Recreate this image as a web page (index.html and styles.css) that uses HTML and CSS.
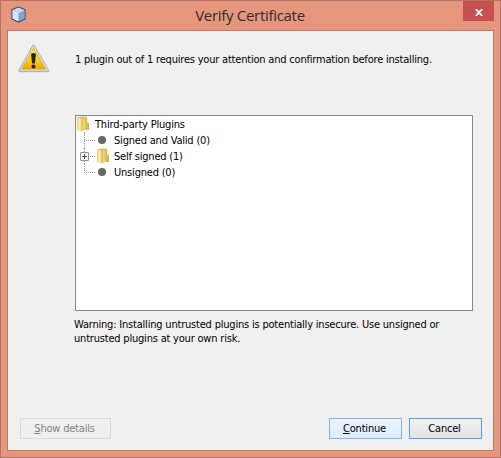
FILE: index.html
```html
<!DOCTYPE html>
<html lang="en">
<head>
<meta charset="utf-8">
<title>Verify Certificate</title>
<link rel="stylesheet" href="styles.css">
</head>
<body>
<div class="window">
  <header class="titlebar">
    <svg class="app-icon" width="18" height="18" viewBox="0 0 18 18">
      <path d="M8.500 1L15 3.700V13L8.500 16L2 13V3.700Z" fill="#a9c6de" stroke="#34435e" stroke-width="1.100" stroke-linejoin="round"/>
      <path d="M8.500 1.600L14.500 4.200L8.500 6.800L2.500 4.200Z" fill="#c3d9e9"/>
      <path d="M2.600 4.500L8.300 6.900V15.200L2.600 12.600Z" fill="#d3e9f6"/>
      <path d="M8.700 6.900L14.400 4.500V12.600L8.700 15.200Z" fill="#86a3c4"/>
    </svg>
    <h1 class="title"><span>Verify Certificate</span></h1>
    <button class="close" aria-label="Close">
      <svg width="8" height="7" viewBox="0 0 8 7"><path d="M.8 0L7.200 7M7.200 0L.8 7" stroke="#fff" stroke-width="1.800"/></svg>
    </button>
  </header>
  <main class="content">
    <section class="message">
      <svg class="warning-icon" width="32" height="30" viewBox="0 0 32 30">
        <defs><linearGradient id="yellow" x2="0" y2="1"><stop stop-color="#fff253"/><stop offset=".5" stop-color="#f8d51c"/><stop offset="1" stop-color="#efa800"/></linearGradient></defs>
        <path d="M15.500 2.500L29.500 26.500H2Z" fill="#c4c4c4" stroke="#b4b4b4" stroke-width="3.400" stroke-linejoin="round"/>
        <path d="M15.500 2.800L29 26H2.500Z" fill="none" stroke="#dedede" stroke-width="1.500" stroke-linejoin="round"/>
        <path d="M15.500 4.500L27.500 25H3.800Z" fill="url(#yellow)" stroke="#d4a900" stroke-width=".7"/>
        <path d="M13.100 10.500Q13.100 9 15.500 9T17.900 10.500L16.900 19.500H14.100Z" fill="#242424"/>
        <circle cx="15.500" cy="22.500" r="2" fill="#242424"/>
      </svg>
      <p class="prompt">1 plugin out of 1 requires your attention and confirmation before installing.</p>
    </section>
    <ul class="tree">
      <li class="root"><svg class="folder" width="14" height="16"><use href="#folder"/></svg><span>Third-party Plugins</span></li>
      <li class="node"><i class="branch"></i><i class="dot"></i><span>Signed and Valid (0)</span></li>
      <li class="node"><i class="branch"><svg class="expand" width="9" height="9"><rect x=".5" y=".5" width="8" height="8" rx=".5" fill="#f6f6f6" stroke="#919191"/><path d="M2 4.500H7M4.500 2V7" stroke="#2850a8"/></svg></i><svg class="folder" width="14" height="16">
        <defs>
          <linearGradient id="flap"><stop stop-color="#e9cd68"/><stop offset=".5" stop-color="#faeeb0"/><stop offset="1" stop-color="#eed67c"/></linearGradient>
          <linearGradient id="back"><stop stop-color="#f4e293"/><stop offset="1" stop-color="#d9b342"/></linearGradient>
        </defs>
        <g id="folder"><path d="M1 1.500L5 .5H11V6L13 7V14H1Z" fill="#e0bf55"/><path d="M1 1.500L6 3V15.500L1 14Z" fill="url(#flap)"/><path d="M6.500 3L11 1V12.500L6.500 15.500Z" fill="url(#back)"/><path d="M6 3V15.500" stroke="#cda63a" stroke-width=".7"/><path d="M12.300 10V13.500" stroke="#75b5e0"/></g>
      </svg><span>Self signed (1)</span></li>
      <li class="node last"><i class="branch"></i><i class="dot"></i><span>Unsigned (0)</span></li>
    </ul>
    <p class="warning">Warning: Installing untrusted plugins is potentially insecure. Use unsigned or<br>untrusted plugins at your own risk.</p>
    <footer class="actions">
      <button class="btn details" disabled><span><u>S</u>how details</span></button>
      <button class="btn continue"><span><u>C</u>ontinue</span></button>
      <button class="btn cancel"><span>Cancel</span></button>
    </footer>
  </main>
</div>
</body>
</html>
```
FILE: styles.css
```css
* { box-sizing: border-box; }
body { margin: 0; }
h1, p, ul { margin: 0; padding: 0; }
.window {
  width: 501px; height: 458px; padding: 0 6px 6px; display: flex; flex-direction: column;
  border: 1px solid #b27462; background: #e6967c;
  font: 11px/16px "DejaVu Sans Condensed", "DejaVu Sans", sans-serif; font-stretch: condensed; letter-spacing: -.2px; color: #000;
}
.titlebar { height: 29px; display: flex; align-items: flex-start; }
.app-icon { margin: 5px 0 0 3px; }
.title { flex: 1; padding: 4px 0 0 9px; text-align: center; font: 400 15px/20px "Open Sans", sans-serif; color: #302d2c; letter-spacing: -.3px; }
.close { width: 31px; height: 20px; padding: 2px 0 0 1px; border: 0; background: #c75050; display: flex; align-items: center; justify-content: center; }
.content { flex: 1; border: 1px solid #c17761; background: #f0f0f0; padding: 0 20px 0 12px; display: flex; flex-direction: column; }
.message { height: 84px; display: flex; align-items: flex-start; }
.warning-icon { margin: 13px 0 0 -2px; }
.prompt { margin: 21px 0 0 25px; white-space: nowrap; }
.tree { height: 196px; margin-left: 55px; border: 1px solid #828790; background: #fff; list-style: none; }
.tree li { height: 16px; display: flex; align-items: center; }
.tree span { padding-top: 1px; white-space: nowrap; }
.root span { margin-left: 5px; }
.node { padding-left: 8px; }
.branch { position: relative; width: 12px; height: 16px; flex: none; }
.branch::before { content: ""; position: absolute; left: 0; top: 0; height: 16px; border-left: 1px dotted #999; }
.last .branch::before { height: 9px; }
.branch::after { content: ""; position: absolute; left: 0; top: 8px; width: 11px; border-top: 1px dotted #999; }
.expand { position: absolute; z-index: 1; left: -4px; top: 4px; }
.dot { width: 8px; height: 8px; border-radius: 50%; background: #666; margin: 0 8px 0 2px; flex: none; }
.node .folder { margin-right: 4px; }
.warning { margin: 7px 0 0 54px; line-height: 14px; white-space: nowrap; }
.actions { display: flex; margin-top: auto; height: 32px; align-items: flex-start; }
.btn { height: 21px; padding: 1px 0 0; border: 1px solid; font: inherit; line-height: 18px; letter-spacing: -.2px; color: #000; }
.btn u { text-decoration-thickness: 1px; text-underline-offset: 1px; }
.details { width: 91px; padding-right: 2px; border-color: #d9d9d9; background: #efefef; color: #838383; }
.continue { width: 73px; margin-left: auto; padding-right: 2px; border-color: #7eb4ea; background: linear-gradient(#ecf4fc, #dcecfc); }
.cancel { width: 73px; margin: 0 -9px 0 7px; padding-right: 2px; border-color: #569de5; background: linear-gradient(#f0f0f0, #e1e5e9); }
```
